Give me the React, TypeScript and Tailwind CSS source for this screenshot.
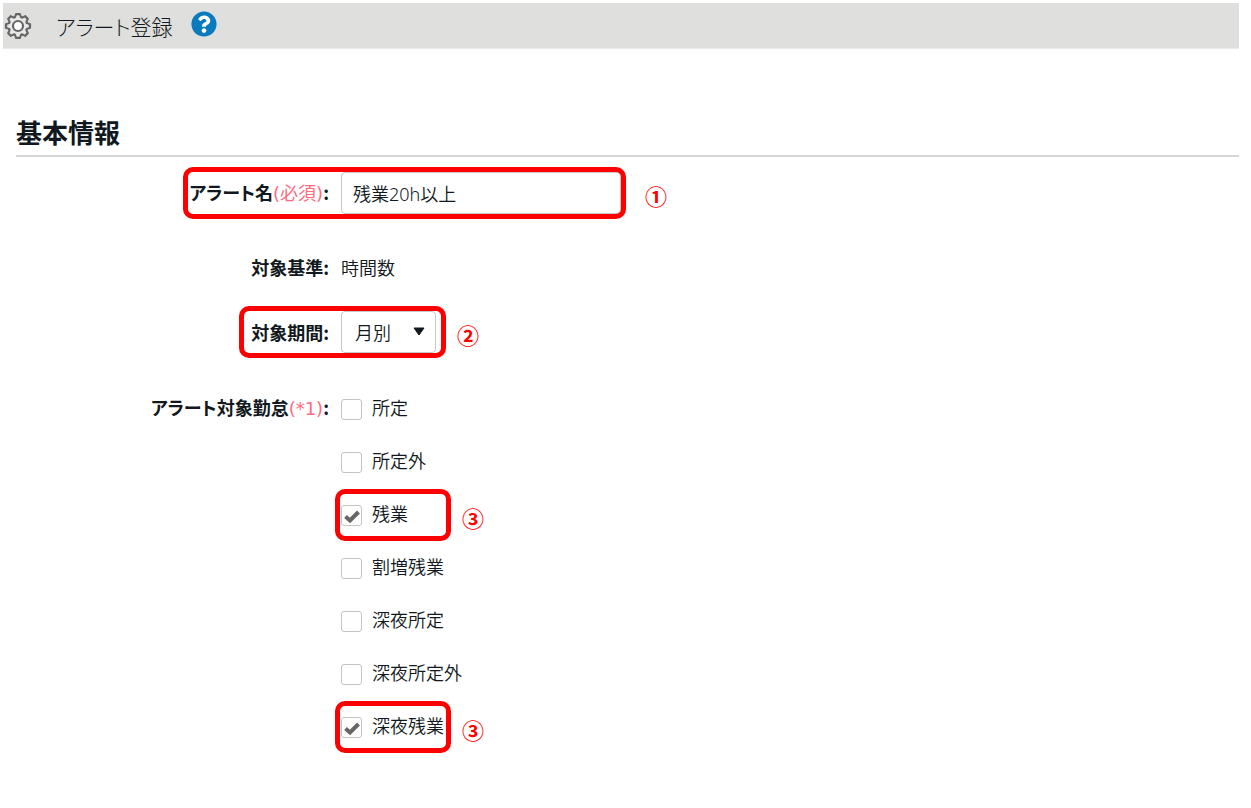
import { useState } from 'react';
import type { ReactNode } from 'react';
import { FaQuestionCircle } from 'react-icons/fa';

interface AttendanceType {
    id: string;
    label: string;
    checked: boolean;
    callout?: string;
}

const ATTENDANCE_TYPES: AttendanceType[] = [
    { id: 'regular', label: '所定', checked: false },
    { id: 'non-regular', label: '所定外', checked: false },
    { id: 'overtime', label: '残業', checked: true, callout: '③' },
    { id: 'premium-overtime', label: '割増残業', checked: false },
    { id: 'night-regular', label: '深夜所定', checked: false },
    { id: 'night-non-regular', label: '深夜所定外', checked: false },
    { id: 'night-overtime', label: '深夜残業', checked: true, callout: '③' },
];

function GearIcon() {
    const teeth = [0, 45, 90, 135, 180, 225, 270, 315];

    return (
        <svg viewBox="0 0 28 28" className="size-7" aria-hidden="true">
            <g fill="#666" stroke="#666" strokeWidth="1.8" strokeLinejoin="round">
                {teeth.map((angle) => (
                    <path key={angle} d="M10.8 6 L12 1.8 H16 L17.2 6 Z" transform={`rotate(${angle} 14 14)`} />
                ))}
                <circle cx="14" cy="14" r="9.6" />
            </g>
            <g fill="#e8e8e7">
                {teeth.map((angle) => (
                    <path key={angle} d="M11.4 7 L12.8 3.2 H15.2 L16.6 7 Z" transform={`rotate(${angle} 14 14)`} />
                ))}
                <circle cx="14" cy="14" r="8.2" />
            </g>
            <circle cx="14" cy="14" r="5" fill="#fff" stroke="#666" strokeWidth="2.2" />
        </svg>
    );
}

interface CalloutProps {
    mark: string;
    className: string;
    markClassName?: string;
}

function Callout({ mark, className, markClassName = 'ml-4' }: CalloutProps) {
    return (
        <div className={`pointer-events-none absolute flex items-center rounded-[10px] border-[5px] border-[#f00] ${className}`}>
            <span className={`absolute left-full mt-1 text-[22px] leading-7 font-bold text-[#f00] ${markClassName}`}>
                {mark}
            </span>
        </div>
    );
}

interface RowProps {
    label: string;
    note?: string;
    htmlFor?: string;
    className?: string;
    children: ReactNode;
}

function Row({ label, note, htmlFor, className = '', children }: RowProps) {
    return (
        <div className={`relative grid grid-cols-[315px_1fr] gap-x-2.5 ${className}`}>
            <label htmlFor={htmlFor} className="pr-0.5 text-right font-bold whitespace-nowrap">
                {label}
                {note && (
                    <span className="font-['DejaVu_Sans','Noto_Sans_CJK_JP',sans-serif] font-normal text-[#ff6b80] [font-feature-settings:normal]">
                        {note}
                    </span>
                )}
                :
            </label>
            {children}
        </div>
    );
}

function AttendanceCheckbox({ item }: { item: AttendanceType }) {
    const [checked, setChecked] = useState(item.checked);

    return (
        <div className="relative w-fit">
            <label className="flex items-center gap-2.5">
                <span className="relative mt-1 size-[21px]">
                    <input
                        type="checkbox"
                        checked={checked}
                        onChange={(e) => setChecked(e.target.checked)}
                        className="block size-full appearance-none rounded-[3px] border border-[#c4c4c4] bg-white"
                    />
                    {checked && (
                        <svg viewBox="0 0 21 21" className="pointer-events-none absolute inset-0" aria-hidden="true">
                            <path d="M4.5 11.5 L9 15.5 L17.5 7" fill="none" stroke="#666" strokeWidth="4" />
                        </svg>
                    )}
                </span>
                {item.label}
            </label>
            {item.callout && <Callout mark={item.callout} className="-top-2.5 -left-1.5 h-[52px] w-[116px]" />}
        </div>
    );
}

export default function App() {
    return (
        <div className="pt-[3px] pr-3 pb-12 font-['Noto_Sans_CJK_JP',sans-serif] text-lg leading-7 font-[350] text-[#111820] [font-feature-settings:'palt']">
            <header className="ml-[3px] flex h-[46px] items-center border-b border-[#e9e9e8] bg-[#dfdfdd] pl-px">
                <GearIcon />
                <h1 className="ml-6 text-[21px] font-light">アラート登録</h1>
                <a href="#help" aria-label="ヘルプ" className="mb-1 ml-[18px] rounded-full bg-[radial-gradient(white_55%,transparent_56%)] text-[26px] text-[#0a7abf]">
                    <FaQuestionCircle />
                </a>
            </header>

            <main className="mt-[67px] ml-4">
                <h2 className="border-b-2 border-[#d8d8d8] pb-[7px] text-[26px] leading-8 font-bold">基本情報</h2>

                <form className="mt-[15px]">
                    <Row label="アラート名" note="(必須)" htmlFor="alert-name" className="items-center">
                        <input
                            id="alert-name"
                            type="text"
                            defaultValue="残業20h以上"
                            className="h-[42px] w-[280px] rounded-[4px] border border-[#c8c8c8] bg-white px-[11px] font-['Noto_Sans','Noto_Sans_CJK_JP',sans-serif] [font-feature-settings:normal]"
                        />
                        <Callout mark="①" className="-inset-y-[5px] left-[167px] w-[443px]" markClassName="ml-6" />
                    </Row>

                    <Row label="対象基準" className="mt-[39px]">
                        <span>時間数</span>
                    </Row>

                    <Row label="対象期間" htmlFor="period" className="mt-[30px] items-center">
                        <div className="relative w-[95px]">
                            <select
                                id="period"
                                className="h-[42px] w-full appearance-none rounded-[4px] border border-[#c8c8c8] bg-white px-[13px]"
                            >
                                <option>月別</option>
                            </select>
                            <svg viewBox="0 0 14 9" className="pointer-events-none absolute top-4 right-2.5 w-3.5" aria-hidden="true">
                                <path d="M2 1 H12 L7 8 Z" fill="#111820" stroke="#111820" strokeLinejoin="round" />
                            </svg>
                        </div>
                        <Callout mark="②" className="-inset-y-[5px] left-[223px] w-[207px]" />
                    </Row>

                    <Row label="アラート対象勤怠" note="(*1)" className="mt-10">
                        <div className="flex flex-col gap-[25px]">
                            {ATTENDANCE_TYPES.map((item) => (
                                <AttendanceCheckbox key={item.id} item={item} />
                            ))}
                        </div>
                    </Row>
                </form>
            </main>
        </div>
    );
}
